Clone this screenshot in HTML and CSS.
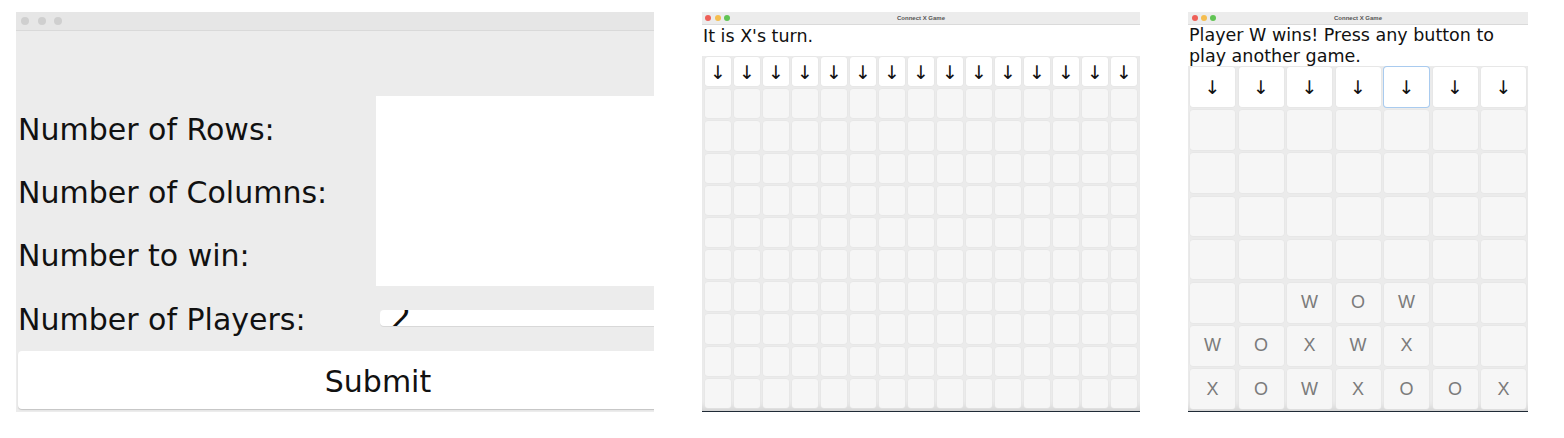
FILE: index.html
```html
<!DOCTYPE html>
<html>
<head>
<meta charset="utf-8">
<title>Connect X</title>
<link rel="stylesheet" href="styles.css">
</head>
<body>
<div class="desk">
  <section class="win win-setup">
    <div class="bar bar-setup">
      <span class="dot dot-gray"></span><span class="dot dot-gray"></span><span class="dot dot-gray"></span>
    </div>
    <div class="setup">
      <div class="form">
        <div class="lbl lbl-top"></div><div class="fld fld-top"></div>
        <div class="lbl">Number of Rows:</div><div class="fld fld-white"></div>
        <div class="lbl">Number of Columns:</div><div class="fld fld-white"></div>
        <div class="lbl">Number to win:</div><div class="fld fld-white"></div>
        <div class="lbl">Number of Players:</div>
        <div class="fld fld-small"><div class="smallinput"><span class="smallval">2</span></div></div>
      </div>
      <div class="submit-row"><button class="submit">Submit</button></div>
    </div>
  </section>

  <section class="win win-game">
    <div class="bar bar-game">
      <div class="lights"><span class="dot dot-sm dot-red"></span><span class="dot dot-sm dot-yellow"></span><span class="dot dot-sm dot-green"></span></div>
      <div class="bar-title">Connect X Game</div>
    </div>
    <div class="status status-mid">It is X's turn.</div>
    <div class="board board-15" id="board15"></div>
  </section>

  <section class="win win-game win-right">
    <div class="bar bar-game">
      <div class="lights lights-right"><span class="dot dot-sm dot-red"></span><span class="dot dot-sm dot-yellow"></span><span class="dot dot-sm dot-green"></span></div>
      <div class="bar-title">Connect X Game</div>
    </div>
    <div class="status status-right">Player W wins! Press any button to play another game.</div>
    <div class="board board-7" id="board7"></div>
  </section>
</div>
<script src="script.js"></script>
</body>
</html>
```

FILE: styles.css
```css
* { box-sizing: border-box; }
html, body { margin: 0; padding: 0; background: #ffffff; }
body { font-family: "DejaVu Sans", sans-serif; color: #111; }

.desk {
  display: flex;
  align-items: flex-start;
  padding: 12px 0 0 16px;
  gap: 48px;
}

.win {
  height: 400px;
  overflow: hidden;
  display: flex;
  flex-direction: column;
}

/* ---------- setup window ---------- */
.win-setup { width: 638px; background: #ececec; }
.bar-setup {
  height: 19px;
  flex: none;
  background: #e6e6e6;
  border-bottom: 1px solid #d9d9d9;
  display: flex;
  align-items: center;
  gap: 8.5px;
  padding-left: 5px;
}
.dot { display: block; border-radius: 50%; flex: none; }
.dot-gray { width: 8px; height: 8px; background: #cfcfcf; }

.setup { width: 760px; flex: 1; display: flex; flex-direction: column; }
.form {
  display: grid;
  grid-template-columns: 360px 1fr;
  grid-template-rows: 65px 63px 63px 64px 63px;
}
.lbl {
  font-size: 30px;
  line-height: 34px;
  display: flex;
  align-items: center;
  padding: 4px 0 0 2px;
  color: #111;
}
.fld-white { background: #ffffff; }
.fld-small { display: flex; align-items: center; padding-left: 4px; }
.smallinput {
  width: 100%;
  height: 16px;
  background: #ffffff;
  border-radius: 4px 0 0 4px;
  overflow: hidden;
  padding-left: 10px;
  box-shadow: 0 1px 0 #d8d8d8;
}
.smallval {
  display: block;
  font-size: 34px;
  line-height: 34px;
  margin-top: -10px;
  color: #111;
}
.submit-row { padding: 2px 0 0 2px; }
.submit {
  width: 720px;
  height: 58px;
  background: #ffffff;
  border: none;
  border-radius: 4px;
  box-shadow: 0 1px 1px #c4c4c4;
  font-family: "DejaVu Sans", sans-serif;
  font-size: 30px;
  color: #111;
  padding: 2px 0 0 0;
}

/* ---------- game windows ---------- */
.win-game {
  width: 438px;
  background: #ffffff;
  border-bottom: 1px solid #1f2a36;
}
.win-right { width: 340px; }
.bar-game {
  height: 13px;
  flex: none;
  background: #ececec;
  border-bottom: 1px solid #dadada;
  display: grid;
  grid-template-columns: 1fr auto 1fr;
  align-items: center;
}
.lights { display: flex; gap: 3.5px; padding-left: 3px; }
.lights-right { padding-left: 3.5px; gap: 3px; }
.dot-sm { width: 6px; height: 6px; }
.dot-red { background: #ee5f57; }
.dot-yellow { background: #f5bd4f; }
.dot-green { background: #61c454; }
.bar-title {
  font-family: "Liberation Sans", sans-serif;
  font-size: 6px;
  font-weight: bold;
  color: #555;
  line-height: 8px;
}

.status {
  flex: none;
  font-family: "DejaVu Sans", sans-serif;
  font-size: 17.5px;
  line-height: 21px;
  color: #111;
  padding-left: 1px;
}
.status-mid { height: 31px; padding-top: 1px; }
.status-right { height: 41px; padding-top: 0; }

.board {
  flex: 1;
  display: grid;
  background: #ebebeb;
  box-shadow: inset 0 -9px 8px -7px rgba(0,0,0,0.14);
}
.board-15 {
  grid-template-columns: repeat(15, 1fr);
  grid-template-rows: repeat(11, 1fr);
  gap: 3px;
  padding: 1px 3px 3px 3px;
}
.board-7 {
  grid-template-columns: repeat(7, 1fr);
  grid-template-rows: repeat(8, 1fr);
  gap: 3.5px;
  padding: 1px 2px 2px 2px;
}
.cell {
  background: #f6f6f6;
  border-radius: 3px;
  box-shadow: 0 0 0 0.5px #e4e4e4;
  display: flex;
  align-items: center;
  justify-content: center;
  font-family: "Liberation Sans", sans-serif;
  font-size: 18px;
  color: #7b7b7b;
}
.drop {
  background: #ffffff;
  border: none;
  padding: 0;
  font-family: "DejaVu Sans", sans-serif;
  font-size: 19px;
  color: #111;
}
.drop-focus { box-shadow: 0 0 0 1px #a9cbef; }
```

FILE: script.js
```js
function build(el, cols, rows, data, focus) {
  for (let c = 0; c < cols; c++) {
    const b = document.createElement('button');
    b.className = 'cell drop' + (c === focus ? ' drop-focus' : '');
    b.textContent = '\u2193\uFE0E';
    el.appendChild(b);
  }
  for (let r = 0; r < rows; r++) {
    for (let c = 0; c < cols; c++) {
      const d = document.createElement('div');
      d.className = 'cell';
      const v = data && data[r] ? data[r][c] : ' ';
      d.textContent = v && v !== ' ' ? v : '';
      el.appendChild(d);
    }
  }
}
build(document.getElementById('board15'), 15, 10, null, -1);
build(document.getElementById('board7'), 7, 7, [
  "       ",
  "       ",
  "       ",
  "       ",
  "  WOW  ",
  "WOXWX  ",
  "XOWXOOX"
], 4);
```
